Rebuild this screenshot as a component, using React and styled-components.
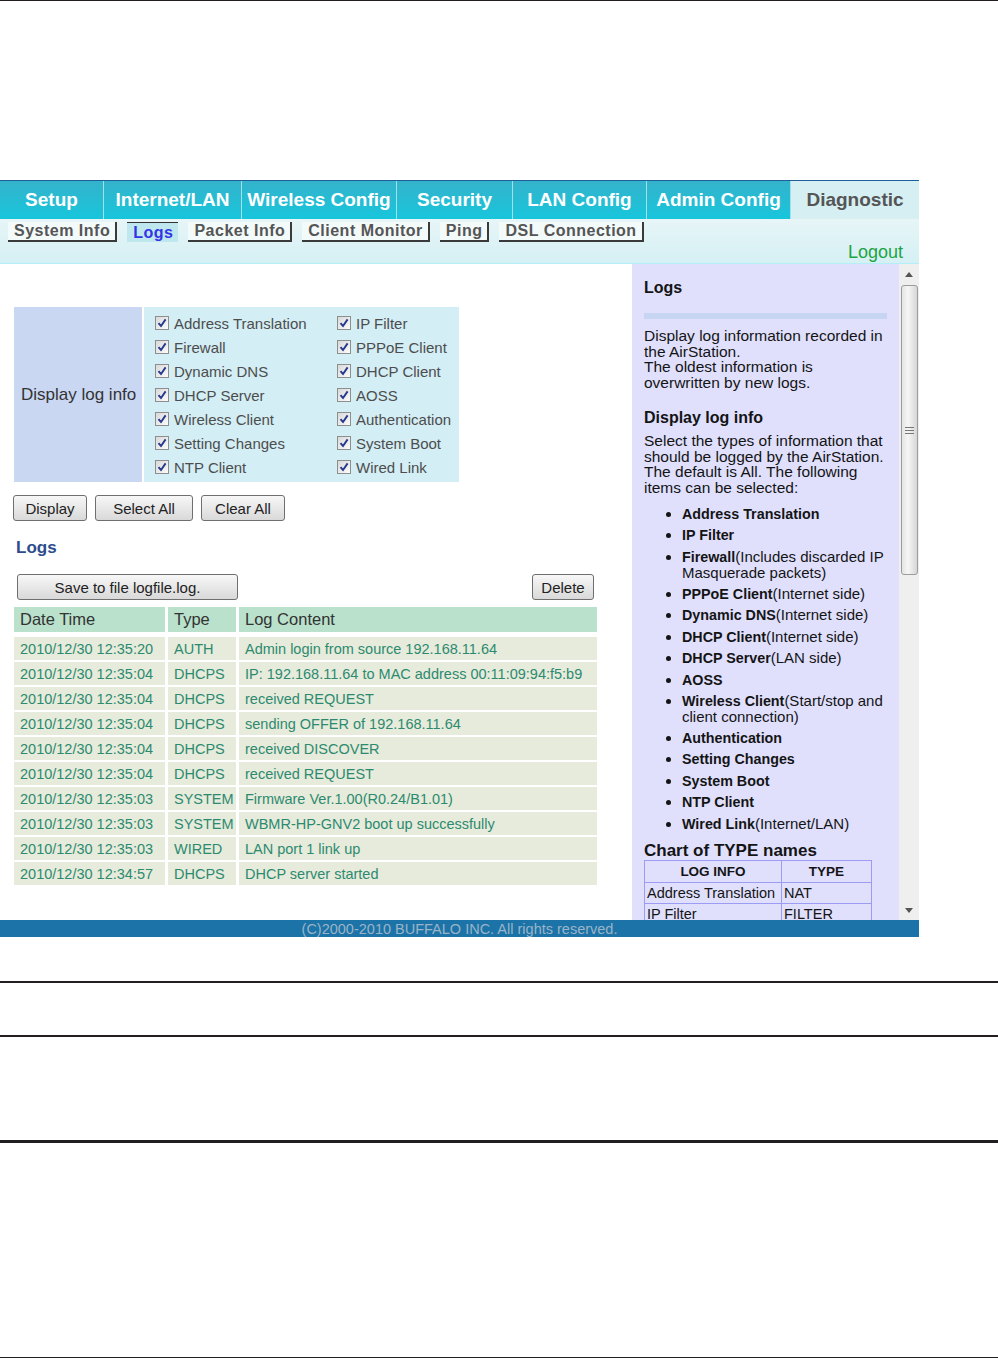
import React from "react";
import styled, { createGlobalStyle } from "styled-components";

const GlobalStyle = createGlobalStyle`
  html, body {
    margin: 0;
    padding: 0;
    background: #fff;
  }
  body {
    font-family: "Liberation Sans", Arial, sans-serif;
    width: 998px;
    height: 1359px;
    overflow: hidden;
  }
  * { box-sizing: border-box; }
`;

const Page = styled.div`
  width: 998px;
  height: 1359px;
  display: flex;
  flex-direction: column;
`;

const Rule = styled.div`
  flex: none;
  height: ${(p) => p.$h}px;
  margin-top: ${(p) => p.$top || 0}px;
  background: #231f20;
`;

const Frame = styled.div`
  flex: none;
  width: 919px;
  margin-top: 179px;
  display: flex;
  flex-direction: column;
`;

/* top tabs */
const NavBar = styled.div`
  display: flex;
  height: 39px;
  border-top: 1px solid #1e5f9a;
`;

const Tab = styled.div`
  width: ${(p) => p.$w}px;
  display: flex;
  align-items: center;
  justify-content: center;
  font-size: 19px;
  font-weight: bold;
  color: ${(p) => (p.$active ? "#555" : "#fff")};
  background: ${(p) =>
    p.$active ? "#d6eff3" : "linear-gradient(#34b3cb, #17c6dc)"};
  border-right: ${(p) => (p.$active ? "none" : "1px solid #9fe2ec")};
  white-space: nowrap;
`;

const SubNav = styled.div`
  height: 45px;
  display: flex;
  flex-direction: column;
  padding: 3px 16px 0 8px;
  background: linear-gradient(#e7f5f7, #d5f0f4);
  border-bottom: 1px solid #b4eef6;
`;

const SubTabs = styled.div`
  display: flex;
  gap: 10px;
`;

const SubTab = styled.div`
  height: 20px;
  padding: 0 5px 0 6px;
  font-size: 16px;
  font-weight: bold;
  letter-spacing: 0.5px;
  line-height: ${(p) => (p.$active ? "19px" : "18px")};
  white-space: nowrap;
  color: ${(p) => (p.$active ? "#3434e6" : "#555")};
  background: ${(p) => (p.$active ? "#bfe8ee" : "#f3fafa")};
  border-top: ${(p) => (p.$active ? "1px solid #333" : "none")};
  border-right: ${(p) => (p.$active ? "none" : "2px solid #3a3a3a")};
  border-bottom: ${(p) => (p.$active ? "none" : "2px solid #3a3a3a")};
`;

const Logout = styled.div`
  align-self: flex-end;
  margin-top: auto;
  padding-bottom: 1px;
  font-size: 18px;
  line-height: 20px;
  color: #1ea344;
`;

/* main area */
const Main = styled.div`
  display: flex;
  height: 656px;
`;

const LeftPane = styled.div`
  width: 632px;
  padding: 43px 0 0 14px;
  background: #fff;
`;

const FilterBox = styled.div`
  display: flex;
  gap: 2px;
  width: 445px;
  height: 175px;
`;

const FilterLabel = styled.div`
  width: 128px;
  display: flex;
  align-items: center;
  padding-left: 7px;
  font-size: 17px;
  color: #333;
  background: #c9d7f2;
`;

const FilterGrid = styled.div`
  flex: 1;
  display: grid;
  grid-template-columns: 182px 1fr;
  grid-auto-rows: 24px;
  padding: 4px 0 3px 11px;
  background: #d3eef5;
`;

const CheckItem = styled.label`
  display: flex;
  align-items: center;
  gap: 5px;
  font-size: 15px;
  color: #4d4d4d;
  white-space: nowrap;
`;

const CheckBox = styled.span`
  width: 14px;
  height: 14px;
  display: flex;
  align-items: center;
  justify-content: center;
  border: 1px solid #8e8e8e;
  background: linear-gradient(135deg, #d9d9d9, #fbfbfb);
`;

const ButtonRow = styled.div`
  display: flex;
  gap: 8px;
  margin-top: ${(p) => p.$top}px;
  margin-left: ${(p) => (p.$spread ? "3px" : "-1px")};
  justify-content: ${(p) => (p.$spread ? "space-between" : "flex-start")};
  width: ${(p) => (p.$spread ? "577px" : "auto")};
`;

const Button = styled.button`
  width: ${(p) => p.$w}px;
  height: 26px;
  padding: 0;
  border: 1px solid #6f6f6f;
  border-radius: 3px;
  background: linear-gradient(#f7f7f7, #d9d9d9);
  font-family: "Liberation Sans", Arial, sans-serif;
  font-size: 15px;
  color: #222;
`;

const SectionTitle = styled.div`
  margin-top: 17px;
  margin-left: 2px;
  font-size: 17px;
  font-weight: bold;
  line-height: 20px;
  color: #2c4c8c;
`;

const LogTable = styled.div`
  width: 583px;
  margin-top: 7px;
`;

const LogRow = styled.div`
  display: grid;
  grid-template-columns: 151px 68px 358px;
  column-gap: 3px;
  height: ${(p) => (p.$head ? 25 : 23)}px;
`;

const LogCell = styled.div`
  padding-left: 6px;
  white-space: nowrap;
  overflow: hidden;
  font-size: ${(p) => (p.$head ? "16.5px" : "14.5px")};
  line-height: ${(p) => (p.$head ? "25px" : "24px")};
  color: ${(p) => (p.$head ? "#333" : "#2c8a70")};
  background: ${(p) => (p.$head ? "#b9e1cc" : "#e7ebdb")};
`;

const LogBody = styled.div`
  display: flex;
  flex-direction: column;
  gap: 2px;
  margin-top: 5px;
`;

/* help panel */
const HelpPane = styled.div`
  width: 267px;
  padding: 15px 12px 0;
  overflow: hidden;
  background: #e0e0fd;
  color: #141414;
`;

const HelpTitle = styled.div`
  font-size: ${(p) => p.$size || 16}px;
  font-weight: bold;
  line-height: ${(p) => (p.$size ? 19 : 18)}px;
  margin-top: ${(p) => p.$top || 0}px;
`;

const HelpBar = styled.div`
  height: 6px;
  margin-top: 16px;
  background: #c6d6f2;
`;

const HelpText = styled.p`
  margin: ${(p) => p.$top}px 0 0;
  font-size: 15.5px;
  line-height: 15.5px;
`;

const HelpList = styled.ul`
  margin: 11px 0 0;
  padding-left: 38px;
  list-style: disc;
`;

const HelpItem = styled.li`
  margin-bottom: 5.2px;
  font-size: 15px;
  line-height: 15.3px;

  b {
    font-size: 14.3px;
  }
`;

const TypeChart = styled.table`
  width: 228px;
  border-collapse: collapse;
  font-size: 14.5px;

  td, th {
    border: 1px solid #9c9cf4;
    padding: 0 2px;
    height: 21px;
    white-space: nowrap;
  }
  th {
    font-size: 13.5px;
    height: 22px;
    text-align: center;
  }
  td:first-child, th:first-child {
    width: 137px;
  }
`;

const ScrollTrack = styled.div`
  width: 20px;
  display: flex;
  flex-direction: column;
  background: #efefef;
`;

const ScrollArrow = styled.div`
  height: 20px;
  flex: none;
  display: flex;
  align-items: center;
  justify-content: center;
`;

const ScrollThumb = styled.div`
  height: 290px;
  margin: 1px 1px 0 2px;
  border: 1px solid #9c9c9c;
  border-radius: 3px;
  background: linear-gradient(to right, #e4e4e4, #f6f6f6 40%, #d6d6d6);
  display: flex;
  align-items: center;
  justify-content: center;
`;

const Spacer = styled.div`
  flex: 1;
`;

const Footer = styled.div`
  height: 17px;
  background: #1b73a7;
  color: #9ab3c8;
  font-size: 14.5px;
  line-height: 19px;
  text-align: center;
`;

const tabs = [
  ["Setup", 104],
  ["Internet/LAN", 138],
  ["Wireless Config", 155],
  ["Security", 116],
  ["LAN Config", 134],
  ["Admin Config", 144],
  ["Diagnostic", 128, true],
];

const subTabs = [
  "System Info",
  "Logs",
  "Packet Info",
  "Client Monitor",
  "Ping",
  "DSL Connection",
];

const filters = [
  "Address Translation",
  "IP Filter",
  "Firewall",
  "PPPoE Client",
  "Dynamic DNS",
  "DHCP Client",
  "DHCP Server",
  "AOSS",
  "Wireless Client",
  "Authentication",
  "Setting Changes",
  "System Boot",
  "NTP Client",
  "Wired Link",
];

const logs = [
  ["2010/12/30 12:35:20", "AUTH", "Admin login from source 192.168.11.64"],
  ["2010/12/30 12:35:04", "DHCPS", "IP: 192.168.11.64 to MAC address 00:11:09:94:f5:b9"],
  ["2010/12/30 12:35:04", "DHCPS", "received REQUEST"],
  ["2010/12/30 12:35:04", "DHCPS", "sending OFFER of 192.168.11.64"],
  ["2010/12/30 12:35:04", "DHCPS", "received DISCOVER"],
  ["2010/12/30 12:35:04", "DHCPS", "received REQUEST"],
  ["2010/12/30 12:35:03", "SYSTEM", "Firmware Ver.1.00(R0.24/B1.01)"],
  ["2010/12/30 12:35:03", "SYSTEM", "WBMR-HP-GNV2 boot up successfully"],
  ["2010/12/30 12:35:03", "WIRED", "LAN port 1 link up"],
  ["2010/12/30 12:34:57", "DHCPS", "DHCP server started"],
];

const helpItems = [
  ["Address Translation", ""],
  ["IP Filter", ""],
  ["Firewall", "(Includes discarded IP Masquerade packets)"],
  ["PPPoE Client", "(Internet side)"],
  ["Dynamic DNS", "(Internet side)"],
  ["DHCP Client", "(Internet side)"],
  ["DHCP Server", "(LAN side)"],
  ["AOSS", ""],
  ["Wireless Client", "(Start/stop and client connection)"],
  ["Authentication", ""],
  ["Setting Changes", ""],
  ["System Boot", ""],
  ["NTP Client", ""],
  ["Wired Link", "(Internet/LAN)"],
];

function Check() {
  return (
    <CheckBox>
      <svg width="10" height="10" viewBox="0 0 10 10">
        <path d="M1.5 5.2 L4 8 L8.6 1.4" fill="none" stroke="#26398a" strokeWidth="1.9" />
      </svg>
    </CheckBox>
  );
}

function Arrow({ down }) {
  return (
    <svg width="8" height="5" viewBox="0 0 8 5">
      <path d={down ? "M0 0 H8 L4 5 Z" : "M0 5 H8 L4 0 Z"} fill="#555" />
    </svg>
  );
}

export default function App() {
  return (
    <>
      <GlobalStyle />
      <Page>
        <Rule $h={1} />
        <Frame>
          <NavBar>
            {tabs.map(([label, w, active]) => (
              <Tab key={label} $w={w} $active={active}>
                {label}
              </Tab>
            ))}
          </NavBar>
          <SubNav>
            <SubTabs>
              {subTabs.map((label) => (
                <SubTab key={label} $active={label === "Logs"}>
                  {label}
                </SubTab>
              ))}
            </SubTabs>
            <Logout>Logout</Logout>
          </SubNav>

          <Main>
            <LeftPane>
              <FilterBox>
                <FilterLabel>Display log info</FilterLabel>
                <FilterGrid>
                  {filters.map((f) => (
                    <CheckItem key={f}>
                      <Check />
                      {f}
                    </CheckItem>
                  ))}
                </FilterGrid>
              </FilterBox>

              <ButtonRow $top={13}>
                <Button $w={74}>Display</Button>
                <Button $w={98}>Select All</Button>
                <Button $w={84}>Clear All</Button>
              </ButtonRow>

              <SectionTitle>Logs</SectionTitle>

              <ButtonRow $spread $top={16}>
                <Button $w={221}>Save to file logfile.log.</Button>
                <Button $w={62}>Delete</Button>
              </ButtonRow>

              <LogTable>
                <LogRow $head>
                  <LogCell $head>Date Time</LogCell>
                  <LogCell $head>Type</LogCell>
                  <LogCell $head>Log Content</LogCell>
                </LogRow>
                <LogBody>
                  {logs.map(([date, type, text], i) => (
                    <LogRow key={i}>
                      <LogCell>{date}</LogCell>
                      <LogCell>{type}</LogCell>
                      <LogCell>{text}</LogCell>
                    </LogRow>
                  ))}
                </LogBody>
              </LogTable>
            </LeftPane>

            <HelpPane>
              <HelpTitle>Logs</HelpTitle>
              <HelpBar />
              <HelpText $top={9}>
                Display log information recorded in the AirStation.
                <br />
                The oldest information is overwritten by new logs.
              </HelpText>
              <HelpTitle $top={19}>Display log info</HelpTitle>
              <HelpText $top={6}>
                Select the types of information that should be logged by the
                AirStation. The default is All. The following items can be
                selected:
              </HelpText>
              <HelpList>
                {helpItems.map(([name, note]) => (
                  <HelpItem key={name}>
                    <b>{name}</b>
                    {note}
                  </HelpItem>
                ))}
              </HelpList>
              <HelpTitle $size={17} $top={9}>
                Chart of TYPE names
              </HelpTitle>
              <TypeChart>
                <thead>
                  <tr>
                    <th>LOG INFO</th>
                    <th>TYPE</th>
                  </tr>
                </thead>
                <tbody>
                  <tr>
                    <td>Address Translation</td>
                    <td>NAT</td>
                  </tr>
                  <tr>
                    <td>IP Filter</td>
                    <td>FILTER</td>
                  </tr>
                  <tr>
                    <td>Firewall</td>
                    <td>FIREWALL</td>
                  </tr>
                </tbody>
              </TypeChart>
            </HelpPane>

            <ScrollTrack>
              <ScrollArrow>
                <Arrow />
              </ScrollArrow>
              <ScrollThumb>
                <svg width="9" height="7" viewBox="0 0 9 7">
                  <path d="M0 0.5 H9 M0 3.5 H9 M0 6.5 H9" stroke="#777" strokeWidth="1" />
                </svg>
              </ScrollThumb>
              <Spacer />
              <ScrollArrow>
                <Arrow down />
              </ScrollArrow>
            </ScrollTrack>
          </Main>

          <Footer>(C)2000-2010 BUFFALO INC. All rights reserved.</Footer>
        </Frame>

        <Rule $h={2} $top={44} />
        <Rule $h={2} $top={52} />
        <Rule $h={3} $top={103} />
        <Rule $h={1} $top={214} />
      </Page>
    </>
  );
}
